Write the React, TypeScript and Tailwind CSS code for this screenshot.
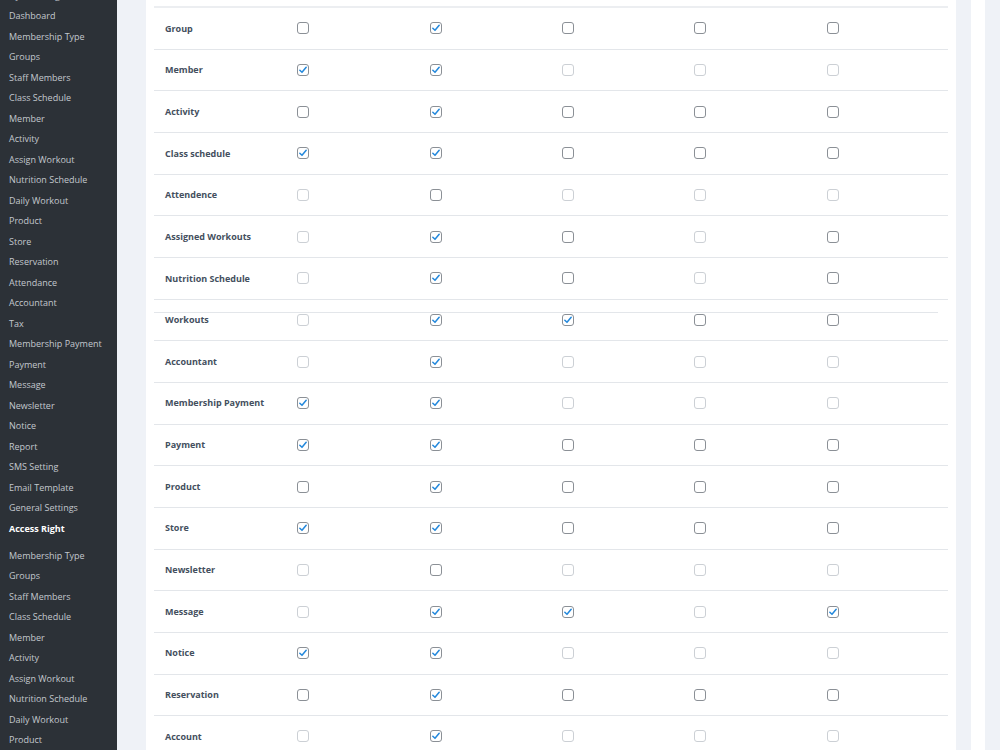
import React from "react";

type Box = 0 | 1 | 2 | 3; // 0 empty, 1 checked, 2 muted empty, 3 muted checked

const navTop = [
  "Gym Setting",
  "Dashboard",
  "Membership Type",
  "Groups",
  "Staff Members",
  "Class Schedule",
  "Member",
  "Activity",
  "Assign Workout",
  "Nutrition Schedule",
  "Daily Workout",
  "Product",
  "Store",
  "Reservation",
  "Attendance",
  "Accountant",
  "Tax",
  "Membership Payment",
  "Payment",
  "Message",
  "Newsletter",
  "Notice",
  "Report",
  "SMS Setting",
  "Email Template",
  "General Settings",
];

const navBottom = [
  "Membership Type",
  "Groups",
  "Staff Members",
  "Class Schedule",
  "Member",
  "Activity",
  "Assign Workout",
  "Nutrition Schedule",
  "Daily Workout",
  "Product",
  "Store",
];

const rows: { label: string; boxes: Box[]; extraLine?: boolean }[] = [
  { label: "Group", boxes: [0, 1, 0, 0, 0] },
  { label: "Member", boxes: [1, 1, 2, 2, 2] },
  { label: "Activity", boxes: [0, 1, 0, 0, 0] },
  { label: "Class schedule", boxes: [1, 1, 0, 0, 0] },
  { label: "Attendence", boxes: [2, 0, 2, 2, 2] },
  { label: "Assigned Workouts", boxes: [2, 1, 0, 2, 0] },
  { label: "Nutrition Schedule", boxes: [2, 1, 0, 2, 0] },
  { label: "Workouts", boxes: [2, 1, 1, 0, 0], extraLine: true },
  { label: "Accountant", boxes: [2, 1, 2, 2, 2] },
  { label: "Membership Payment", boxes: [1, 1, 2, 2, 2] },
  { label: "Payment", boxes: [1, 1, 0, 0, 0] },
  { label: "Product", boxes: [0, 1, 0, 0, 0] },
  { label: "Store", boxes: [1, 1, 0, 0, 0] },
  { label: "Newsletter", boxes: [2, 0, 2, 2, 2] },
  { label: "Message", boxes: [2, 1, 1, 2, 1] },
  { label: "Notice", boxes: [1, 1, 2, 2, 2] },
  { label: "Reservation", boxes: [0, 1, 0, 0, 0] },
  { label: "Account", boxes: [2, 1, 2, 2, 2] },
];

function CheckBox({ kind }: { kind: Box }) {
  const muted = kind === 2 || kind === 3;
  const checked = kind === 1 || kind === 3;
  return (
    <span
      className={
        "relative flex h-[12px] w-[12px] items-center justify-center rounded-[3px] border bg-white " +
        (muted ? "border-[#ccd0d5]" : "border-[#8b9096]")
      }
    >
      {checked && (
        <svg viewBox="0 0 12 12" className="h-[10px] w-[10px]">
          <path
            d="M2.2 6.3 L4.8 8.8 L9.8 2.8"
            fill="none"
            stroke="#2388dc"
            strokeWidth="1.8"
            strokeLinecap="round"
            strokeLinejoin="round"
          />
        </svg>
      )}
    </span>
  );
}

function NavItem({ label, active }: { label: string; active?: boolean }) {
  return (
    <div
      className={
        "flex h-[20.5px] shrink-0 items-center whitespace-nowrap pl-[9px] text-[9px] " +
        (active ? "mb-[6.5px] font-bold text-white" : "text-[#c3c8ce]")
      }
    >
      {label}
    </div>
  );
}

export default function App() {
  return (
    <div
      className="flex h-[750px] w-[1000px] overflow-hidden bg-[#eff2f7]"
      style={{ fontFamily: '"Open Sans", "Noto Sans", sans-serif' }}
    >
      {/* side navigation */}
      <aside className="flex w-[117px] shrink-0 flex-col bg-[#2c3137]">
        <div className="mt-[-14.75px] flex flex-col">
          {navTop.map((n, i) => (
            <NavItem key={"t" + i} label={n} />
          ))}
          <NavItem label="Access Right" active />
          {navBottom.map((n, i) => (
            <NavItem key={"b" + i} label={n} />
          ))}
        </div>
      </aside>

      {/* access right table */}
      <main className="flex flex-1">
        <section className="ml-[29px] w-[810px] shrink-0 bg-white px-[8px]">
          <div className="mt-[6px] h-[2px] bg-[#eceef1]" />
          {rows.map((r) => (
            <div
              key={r.label}
              className="relative grid h-[41.667px] grid-cols-6 items-center border-b border-[#e3e6ea]"
            >
              {r.extraLine && (
                <div className="absolute left-0 right-[10px] top-[12.5px] h-px bg-[#e3e6ea]" />
              )}
              <div className="whitespace-nowrap pl-[11px] text-[9px] font-bold text-[#444f5e]">
                {r.label}
              </div>
              {r.boxes.map((b, i) => (
                <div key={i} className="pl-[11px]">
                  <CheckBox kind={b} />
                </div>
              ))}
            </div>
          ))}
        </section>
        <div className="ml-[15px] w-[14px] shrink-0 bg-white" />
      </main>
    </div>
  );
}
